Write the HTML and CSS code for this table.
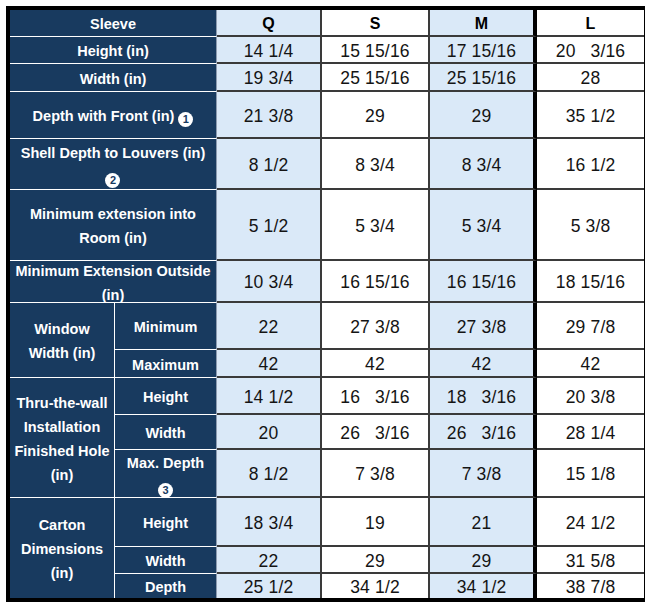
FILE: index.html
```html
<!DOCTYPE html>
<html>
<head>
<meta charset="utf-8">
<link rel="stylesheet" href="styles.css">
</head>
<body>
<div class="sheet">
  <div class="lab cs2 end">Sleeve</div>
  <div class="cell hd q">Q</div><div class="cell hd s">S</div><div class="cell hd m">M</div><div class="cell hd l">L</div>

  <div class="lab cs2 end">Height (in)</div>
  <div class="cell q">14 1/4</div><div class="cell s">15 15/16</div><div class="cell m">17 15/16</div><div class="cell l">20   3/16</div>

  <div class="lab cs2 end">Width (in)</div>
  <div class="cell q">19 3/4</div><div class="cell s">25 15/16</div><div class="cell m">25 15/16</div><div class="cell l">28</div>

  <div class="lab cs2 end"><span>Depth with Front (in) <span class="num">1</span></span></div>
  <div class="cell q">21 3/8</div><div class="cell s">29</div><div class="cell m">29</div><div class="cell l">35 1/2</div>

  <div class="lab cs2 end"><span>Shell Depth to Louvers (in)<br><span class="num">2</span></span></div>
  <div class="cell q">8 1/2</div><div class="cell s">8 3/4</div><div class="cell m">8 3/4</div><div class="cell l">16 1/2</div>

  <div class="lab cs2 end"><span>Minimum extension into<br>Room (in)</span></div>
  <div class="cell q">5 1/2</div><div class="cell s">5 3/4</div><div class="cell m">5 3/4</div><div class="cell l">5 3/8</div>

  <div class="lab cs2 end"><span>Minimum Extension Outside<br>(in)</span></div>
  <div class="cell q">10 3/4</div><div class="cell s">16 15/16</div><div class="cell m">16 15/16</div><div class="cell l">18 15/16</div>

  <div class="lab grp rs2"><span>Window<br>Width (in)</span></div>
  <div class="lab end">Minimum</div>
  <div class="cell q">22</div><div class="cell s">27 3/8</div><div class="cell m">27 3/8</div><div class="cell l">29 7/8</div>
  <div class="lab end">Maximum</div>
  <div class="cell q">42</div><div class="cell s">42</div><div class="cell m">42</div><div class="cell l">42</div>

  <div class="lab grp rs3"><span>Thru-the-wall<br>Installation<br>Finished Hole<br>(in)</span></div>
  <div class="lab end">Height</div>
  <div class="cell q">14 1/2</div><div class="cell s">16   3/16</div><div class="cell m">18   3/16</div><div class="cell l">20 3/8</div>
  <div class="lab end">Width</div>
  <div class="cell q">20</div><div class="cell s">26   3/16</div><div class="cell m">26   3/16</div><div class="cell l">28 1/4</div>
  <div class="lab end"><span>Max. Depth<br><span class="num">3</span></span></div>
  <div class="cell q">8 1/2</div><div class="cell s">7 3/8</div><div class="cell m">7 3/8</div><div class="cell l">15 1/8</div>

  <div class="lab grp rs3 last"><span>Carton<br>Dimensions<br>(in)</span></div>
  <div class="lab end">Height</div>
  <div class="cell q">18 3/4</div><div class="cell s">19</div><div class="cell m">21</div><div class="cell l">24 1/2</div>
  <div class="lab end">Width</div>
  <div class="cell q">22</div><div class="cell s">29</div><div class="cell m">29</div><div class="cell l">31 5/8</div>
  <div class="lab end last">Depth</div>
  <div class="cell q last">25 1/2</div><div class="cell s last">34 1/2</div><div class="cell m last">34 1/2</div><div class="cell l last">38 7/8</div>
</div>
</body>
</html>
```

FILE: styles.css
```css
html, body {
  background: #ffffff;
}
body {
  margin: 6px;
  font-family: "Liberation Sans", Arial, sans-serif;
}
.sheet {
  display: grid;
  grid-template-columns: 105px 102px 105px 108px 107px 107px;
  grid-template-rows: 27px 27px 28px 47px 51px 71px 42px 47px 28px 37px 35px 48px 49px 27px 24px;
  width: max-content;
  border: 4px solid #000;
  box-shadow: -2px 2px 0 -1px #c9c9c9;
}
.cs2 { grid-column: span 2; }
.rs2 { grid-row: span 2; }
.rs3 { grid-row: span 3; }

.lab {
  box-sizing: border-box;
  background: #183a5f;
  color: #ffffff;
  font-weight: bold;
  font-size: 14.5px;
  line-height: 24px;
  display: flex;
  align-items: center;
  justify-content: center;
  text-align: center;
  padding: 2px 3px 0;
  border-bottom: 1px solid #ffffff;
  min-height: 0;
}
.lab.grp {
  border-right: 1px solid #ffffff;
}
.lab.end {
  border-right: 1px solid #8d9bb0;
}
.lab.last {
  border-bottom: none;
}
.num {
  display: inline-block;
  width: 15px;
  height: 15px;
  border-radius: 50%;
  background: #ffffff;
  color: #183a5f;
  font-size: 11px;
  line-height: 15px;
  font-weight: bold;
  text-align: center;
  vertical-align: -2px;
}

.cell {
  box-sizing: border-box;
  display: flex;
  align-items: center;
  justify-content: center;
  white-space: pre;
  font-size: 17.5px;
  letter-spacing: 0.15px;
  padding-top: 3px;
  color: #141414;
  background: #ffffff;
  border-bottom: 2px solid #3a3a3a;
  min-height: 0;
}
.cell.hd {
  font-weight: bold;
  font-size: 16px;
  letter-spacing: 0;
  color: #000;
}
.cell.q { background: #dae9f8; border-right: 2px solid #3a3a3a; }
.cell.s { border-right: 2px solid #3a3a3a; }
.cell.m { background: #dae9f8; border-right: 4px solid #000; }
.cell.last { border-bottom: none; }
```
